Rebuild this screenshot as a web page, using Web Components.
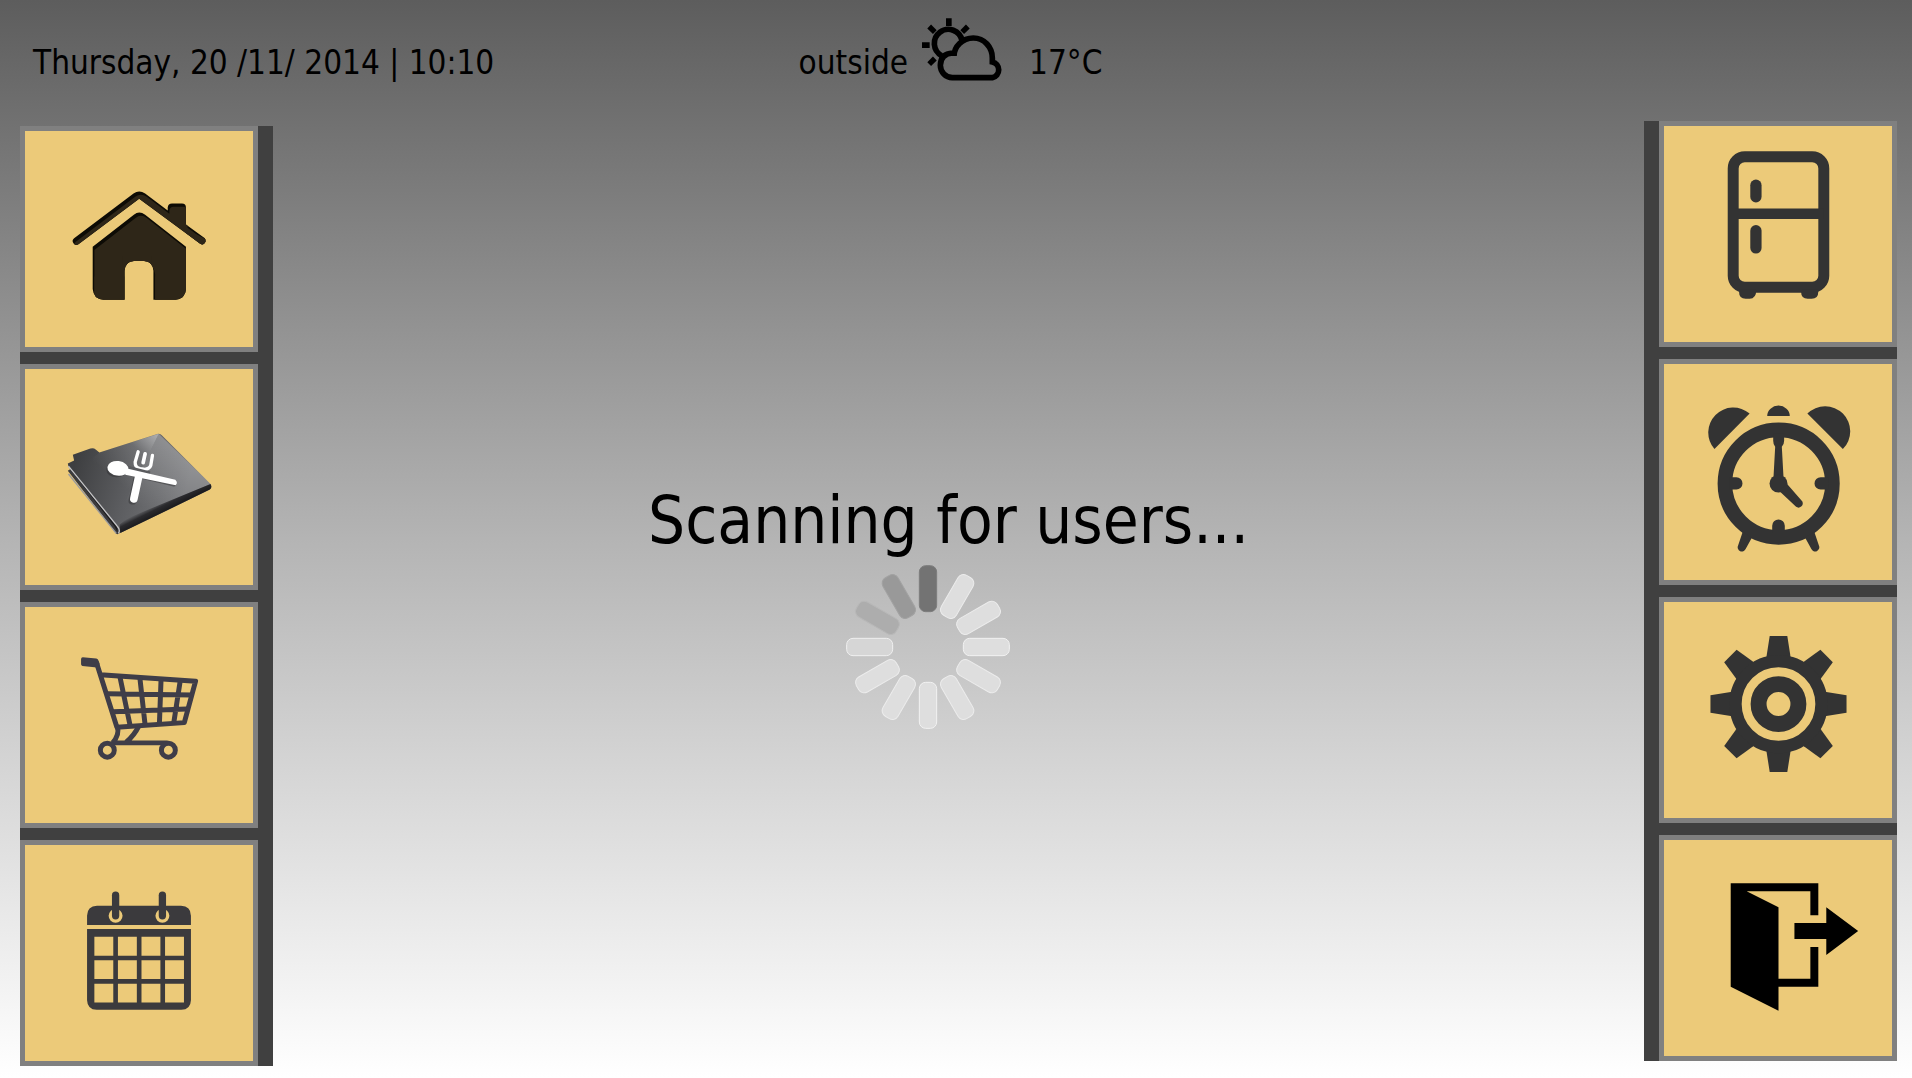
<!DOCTYPE html>
<html lang="en">
<head>
<meta charset="utf-8">
<title>Smart kitchen</title>
<style>
  html, body { margin: 0; min-height: 100%; }
  body { font-family: "DejaVu Sans Condensed", "Noto Sans", sans-serif; color: #000; }
</style>
</head>
<body>
<kitchen-screen>
  <status-bar slot="header">
    <time slot="date" datetime="2014-11-20T10:10">Thursday, 20 /11/ 2014 | 10:10</time>
    <span slot="place">outside</span>
    <span slot="temp">17°C</span>
  </status-bar>

  <nav-rail slot="left" side="left" aria-label="Main">
    <icon-tile label="Home">
      <svg viewBox="75 63 687 648">
        <defs>
          <g id="house">
            <path d="M223 385L402 250Q419 238 437 250L505 301V292Q506 280 518 280H548Q560 280 560 292V343L617 385A11 11 0 0 1 604 402L419 266L237 402A11 11 0 0 1 223 385Z"/>
            <path d="M279 410L403 314Q419 300 437 314L560 410V538Q558 568 528 570H462V483Q460 455 434 453H403Q377 455 375 483V570H312Q281 568 279 538Z"/>
          </g>
          <clipPath id="house-clip">
            <path d="M223 385L402 250Q419 238 437 250L505 301V292Q506 280 518 280H548Q560 280 560 292V343L617 385A11 11 0 0 1 604 402L419 266L237 402A11 11 0 0 1 223 385Z"/>
            <path d="M279 410L403 314Q419 300 437 314L560 410V538Q558 568 528 570H462V483Q460 455 434 453H403Q377 455 375 483V570H312Q281 568 279 538Z"/>
          </clipPath>
        </defs>
        <use href="#house" fill="#0d0b05"/>
        <g clip-path="url(#house-clip)">
          <use href="#house" x="5" y="10" fill="#2e2618"/>
          <path fill="#2e2618" d="M284 500H375V575H284ZM467 500H565V575H467ZM590 372L625 390L610 410L560 370ZM370 440H455V465H370Z"/>
        </g>
      </svg>
    </icon-tile>
    <icon-tile label="Recipes">
      <svg viewBox="75 57 687 648">
        <defs>
          <linearGradient id="cover" x1="230" y1="320" x2="560" y2="420" gradientUnits="userSpaceOnUse">
            <stop offset="0" stop-color="#3e3f41"/><stop offset=".5" stop-color="#5c5d60"/><stop offset="1" stop-color="#77787b"/>
          </linearGradient>
          <linearGradient id="shine" x1="480" y1="252" x2="360" y2="400" gradientUnits="userSpaceOnUse">
            <stop offset="0" stop-color="#fff" stop-opacity=".5"/><stop offset=".4" stop-color="#fff" stop-opacity=".12"/><stop offset="1" stop-color="#fff" stop-opacity="0"/>
          </linearGradient>
          <linearGradient id="gloss" x1="480" y1="252" x2="430" y2="470" gradientUnits="userSpaceOnUse">
            <stop offset="0" stop-color="#fff" stop-opacity=".28"/><stop offset="1" stop-color="#fff" stop-opacity="0"/>
          </linearGradient>
          <linearGradient id="spine" x1="480" y1="455" x2="496" y2="487" gradientUnits="userSpaceOnUse">
            <stop offset="0" stop-color="#6a6b6e"/><stop offset=".45" stop-color="#2b2b2e"/><stop offset="1" stop-color="#19191b"/>
          </linearGradient>
        </defs>
        <path d="M204 362L350 552Q358 556 362 546L352 518L215 355Z" fill="#3b3b3d"/>
        <path d="M206 372L350 551" stroke="#9b9b9d" stroke-width="4" fill="none"/>
        <path d="M215 362L345 530L354 548L352 518L220 350Z" fill="#1c1c1e"/>
        <path d="M204 340L223 331L219 314L272 295Q282 292 288 298L299 307L476 251Q483 250 488 256L634 402Q640 412 632 419L362 550L356 530L206 350Z" fill="url(#cover)"/>
        <path d="M299 307L478 251L355 500L240 360Z" fill="url(#shine)"/>
        <path d="M478 251L634 402L400 500L355 500Z" fill="url(#gloss)"/>
        <path d="M360 524Q380 505 420 490L634 402Q640 412 632 419L362 550Z" fill="url(#spine)"/>
        <path d="M206 348L352 528Q364 542 356 551" stroke="#c4c4c6" stroke-width="4" fill="none"/>
        <g fill="none" stroke="#2c2c2e" stroke-opacity=".45" stroke-linecap="round" transform="translate(-3 4)">
          <path d="M402 448L418 375" stroke-width="24"/><path d="M380 362L527 398" stroke-width="15"/>
          <ellipse cx="354" cy="355" rx="28" ry="20" stroke-width="6"/>
        </g>
        <g fill="none" stroke="#fff" stroke-linecap="round">
          <path d="M416 305L407 336Q406 352 422 356L436 358Q450 357 454 346L459 316" stroke-width="10"/>
          <path d="M437 311L431 338" stroke-width="11"/>
          <path d="M403 447L418 378" stroke-width="23"/>
        </g>
        <path d="M380 358L450 376" stroke="#5a5b5e" stroke-width="24"/>
        <path d="M376 354L528 389Q537 398 529 406L377 374Z" fill="#fff"/>
        <ellipse cx="355" cy="355" rx="32" ry="22" transform="rotate(7 355 355)" fill="#fff"/>
      </svg>
    </icon-tile>
    <icon-tile label="Shopping list">
      <svg viewBox="75 51 687 648" fill="none" stroke="#3f3d48" stroke-width="15">
        <path d="M249 201L290 205Q295 206 297 212L300 222L292 232L248 227Q244 226 244 222V206Q244 201 249 201Z" fill="#3f3d48" stroke="none"/>
        <path d="M290 216L352 412L555 398L589 273L302 254" stroke-linejoin="round"/>
        <path d="M322 311L578 315M340 365L562 357M361 260L392 408M421 262L437 406M485 266L480 402M543 270L523 400"/>
        <path d="M353 410Q361 433 339 459M417 410Q405 435 380 457M335 459H505"/>
        <circle cx="323" cy="481" r="21"/><circle cx="507" cy="481" r="21"/>
      </svg>
    </icon-tile>
    <icon-tile label="Calendar">
      <svg viewBox="75 75 687 648" fill="#3b3a3d">
        <path d="M262 315V287Q262 258 292 257H545Q575 258 575 287V315Z"/>
        <path fill-rule="evenodd" d="M262 327H575V541Q574 569 546 570H291Q263 569 262 541ZM284 350V407H341V350ZM355 350V407H412V350ZM426 350V407H483V350ZM497 350V407H554V350ZM284 421V477H341V421ZM355 421V477H412V421ZM426 421V477H483V421ZM497 421V477H554V421ZM284 492V548H341V492ZM355 492V548H412V492ZM426 492V548H483V492ZM497 492V548H554V492Z"/>
        <g fill="#ecca79"><circle cx="348" cy="287" r="21"/><circle cx="489" cy="287" r="21"/></g>
        <rect x="337" y="214" width="22" height="84" rx="11"/><rect x="478" y="214" width="22" height="84" rx="11"/>
      </svg>
    </icon-tile>
  </nav-rail>

  <scan-status>Scanning for users...</scan-status>

  <nav-rail slot="right" side="right" aria-label="Appliances">
    <icon-tile label="Fridge">
      <svg viewBox="99 48 687 648" fill="#333">
        <rect x="307.5" y="139.5" width="273" height="393" rx="35" fill="none" stroke="#333" stroke-width="33"/>
        <path d="M310 295H580V327H310ZM325 540H377Q377 567 357 567H345Q325 567 325 545ZM512 540H564V545Q564 567 544 567H532Q512 567 512 545Z"/>
        <rect x="359" y="208" width="34" height="69" rx="17"/><rect x="359" y="345" width="34" height="86" rx="17"/>
      </svg>
    </icon-tile>
    <icon-tile label="Alarm">
      <svg viewBox="99 42 687 648" fill="#333">
        <circle cx="444.5" cy="401" r="162" fill="none" stroke="#333" stroke-width="44"/>
        <path d="M251 297A75.5 75.5 0 0 1 357 190ZM638 297A75.5 75.5 0 0 0 531 190ZM410 197A34 31 0 0 1 478 197Z"/>
        <path d="M428 250H461V272Q461 283 454 290L459 380H429L434 290Q428 283 428 272Z"/>
        <circle cx="444" cy="401" r="27"/>
        <path d="M448 425L497 471A13 13 0 0 0 516 455L468 400Z"/>
        <path d="M295 382H317A18.5 18.5 0 0 1 317 419H295ZM594 382H571A18.5 18.5 0 0 0 571 419H594ZM425 550V528A19 19 0 0 1 463 528V550Z"/>
        <path d="M336 547L322 588A12.5 12.5 0 0 0 345 598L364 563ZM552 547L566 588A12.5 12.5 0 0 1 543 598L524 563Z"/>
      </svg>
    </icon-tile>
    <icon-tile label="Settings">
      <svg viewBox="99 66 687 648" fill="#333">
        <defs><path id="tooth" d="M417.5 167H470.5L480 228V245H408V228Z"/></defs>
        <use href="#tooth"/><use href="#tooth" transform="rotate(45 444 372)"/>
        <use href="#tooth" transform="rotate(90 444 372)"/><use href="#tooth" transform="rotate(135 444 372)"/>
        <use href="#tooth" transform="rotate(180 444 372)"/><use href="#tooth" transform="rotate(225 444 372)"/>
        <use href="#tooth" transform="rotate(270 444 372)"/><use href="#tooth" transform="rotate(315 444 372)"/>
        <g fill="none" stroke="#333">
          <circle cx="444" cy="372" r="129.5" stroke-width="37"/>
          <circle cx="444" cy="372" r="60" stroke-width="48"/>
        </g>
      </svg>
    </icon-tile>
    <icon-tile label="Exit">
      <svg viewBox="99 60 687 648" fill="#000">
        <path d="M300 189H564V285H540V213H348L444 261V477H540V381H564V501H444V573L300 501Z"/>
        <path d="M492 309H588V261L684 333L588 405V357H492Z"/>
      </svg>
    </icon-tile>
  </nav-rail>
</kitchen-screen>

<script>
class ShadowElement extends HTMLElement {
  constructor() {
    super();
    this.attachShadow({ mode: "open" }).innerHTML = this.render();
  }
}

customElements.define("kitchen-screen", class extends ShadowElement {
  render() {
    return `<style>
      :host {
        display: flex; flex-direction: column; min-height: 100vh;
        background: linear-gradient(#5d5d5d, #979797 33%, #b4b4b4 50%, #d3d3d3 70%, #fff);
      }
      .body { flex: 1; display: flex; align-items: stretch; justify-content: space-between; }
      main { flex: 1; display: flex; justify-content: center; }
      .left { display: flex; padding: 5px 0 12px 20px; }
      .right { display: flex; padding: 0 15px 17px 0; }
    </style>
    <slot name="header"></slot>
    <div class="body">
      <div class="left"><slot name="left"></slot></div>
      <main><slot></slot></main>
      <div class="right"><slot name="right"></slot></div>
    </div>`;
  }
});

customElements.define("status-bar", class extends ShadowElement {
  render() {
    return `<style>
      :host { display: block; }
      header {
        display: grid; grid-template-columns: 1fr auto 1fr; align-items: start;
        height: 121px; padding: 0 44px 0 33px; box-sizing: border-box;
        font-size: 33px; line-height: 40px; white-space: nowrap;
      }
      .text { padding-top: 43px; }
      .weather { display: flex; align-items: flex-start; }
      svg { width: 81px; height: 63px; margin: 18px 26px 0 14px; }
    </style>
    <header>
      <div class="text"><slot name="date"></slot></div>
      <div class="weather">
        <div class="text"><slot name="place"></slot></div>
        <svg viewBox="423 54 243 189" role="img" aria-label="Partly cloudy">
          <g fill="none" stroke="#000" stroke-width="17">
            <path d="M514 233A37 37 0 0 1 478 196Q479 161 515 159Q519 160 519 168C519 140 544 114 577 114C610 114 634 142 634 174V186A24 24 0 0 1 634 233Z"/>
            <path d="M482 167A42 42 0 1 1 543 121"/>
          </g>
          <path d="M495 55H512V78H495ZM423 127H446V144H423Z"/>
          <rect x="445" y="76" width="16" height="24" transform="rotate(-45 453 88)"/>
          <rect x="544" y="76" width="16" height="24" transform="rotate(45 552 88)"/>
          <rect x="445" y="172" width="16" height="24" transform="rotate(45 453 184)"/>
        </svg>
        <div class="text"><slot name="temp"></slot></div>
      </div>
    </header>`;
  }
});

customElements.define("nav-rail", class extends ShadowElement {
  render() {
    return `<style>
      :host { display: flex; }
      nav {
        display: grid; grid-template-columns: 238px; grid-auto-rows: 1fr; gap: 12px;
        background: #404040; border: 0 solid #404040;
      }
      :host([side="left"]) nav { border-right-width: 15px; }
      :host([side="right"]) nav { border-left-width: 15px; }
    </style>
    <nav><slot></slot></nav>`;
  }
});

customElements.define("icon-tile", class extends ShadowElement {
  render() {
    return `<style>
      :host { display: flex; }
      button {
        flex: 1; min-width: 0; padding: 0; margin: 0; display: flex;
        border: 5px solid #808080; background: #ecca79; cursor: pointer;
      }
      ::slotted(svg) { flex: 1; width: 100%; height: 100%; min-height: 0; }
    </style>
    <button type="button"><slot></slot></button>`;
  }
  connectedCallback() {
    this.shadowRoot.querySelector("button").setAttribute("aria-label", this.getAttribute("label"));
  }
});

customElements.define("scan-status", class extends ShadowElement {
  render() {
    const fills = ["#737373", "#dedede", "#dedede", "#dedede", "#dedede", "#dedede",
                   "#dedede", "#dedede", "#dedede", "#d6d6d6", "#adadad", "#999999"];
    const edges = ["#7d7d7d", "#ececec", "#ececec", "#f2f2f2", "#ececec", "#ececec",
                   "#f2f2f2", "#ececec", "#ececec", "#f0f0f0", "#b8b8b8", "#a2a2a2"];
    const petals = fills.map((fill, i) =>
      `<rect x="299" y="78" width="52" height="138" rx="19" fill="${fill}" stroke="${edges[i]}"
        stroke-width="3" transform="rotate(${i * 30} 325 322)"/>`).join("");
    return `<style>
      :host { display: flex; flex-direction: column; align-items: center; padding: 357px 20px 0 0; }
      p { margin: 0; font-size: 65px; line-height: 86px; white-space: nowrap; }
      svg { width: 166px; height: 166px; margin-right: 42px; }
    </style>
    <p role="status"><slot></slot></p>
    <svg viewBox="76 73 498 498" aria-hidden="true">${petals}</svg>`;
  }
});
</script>
</body>
</html>
